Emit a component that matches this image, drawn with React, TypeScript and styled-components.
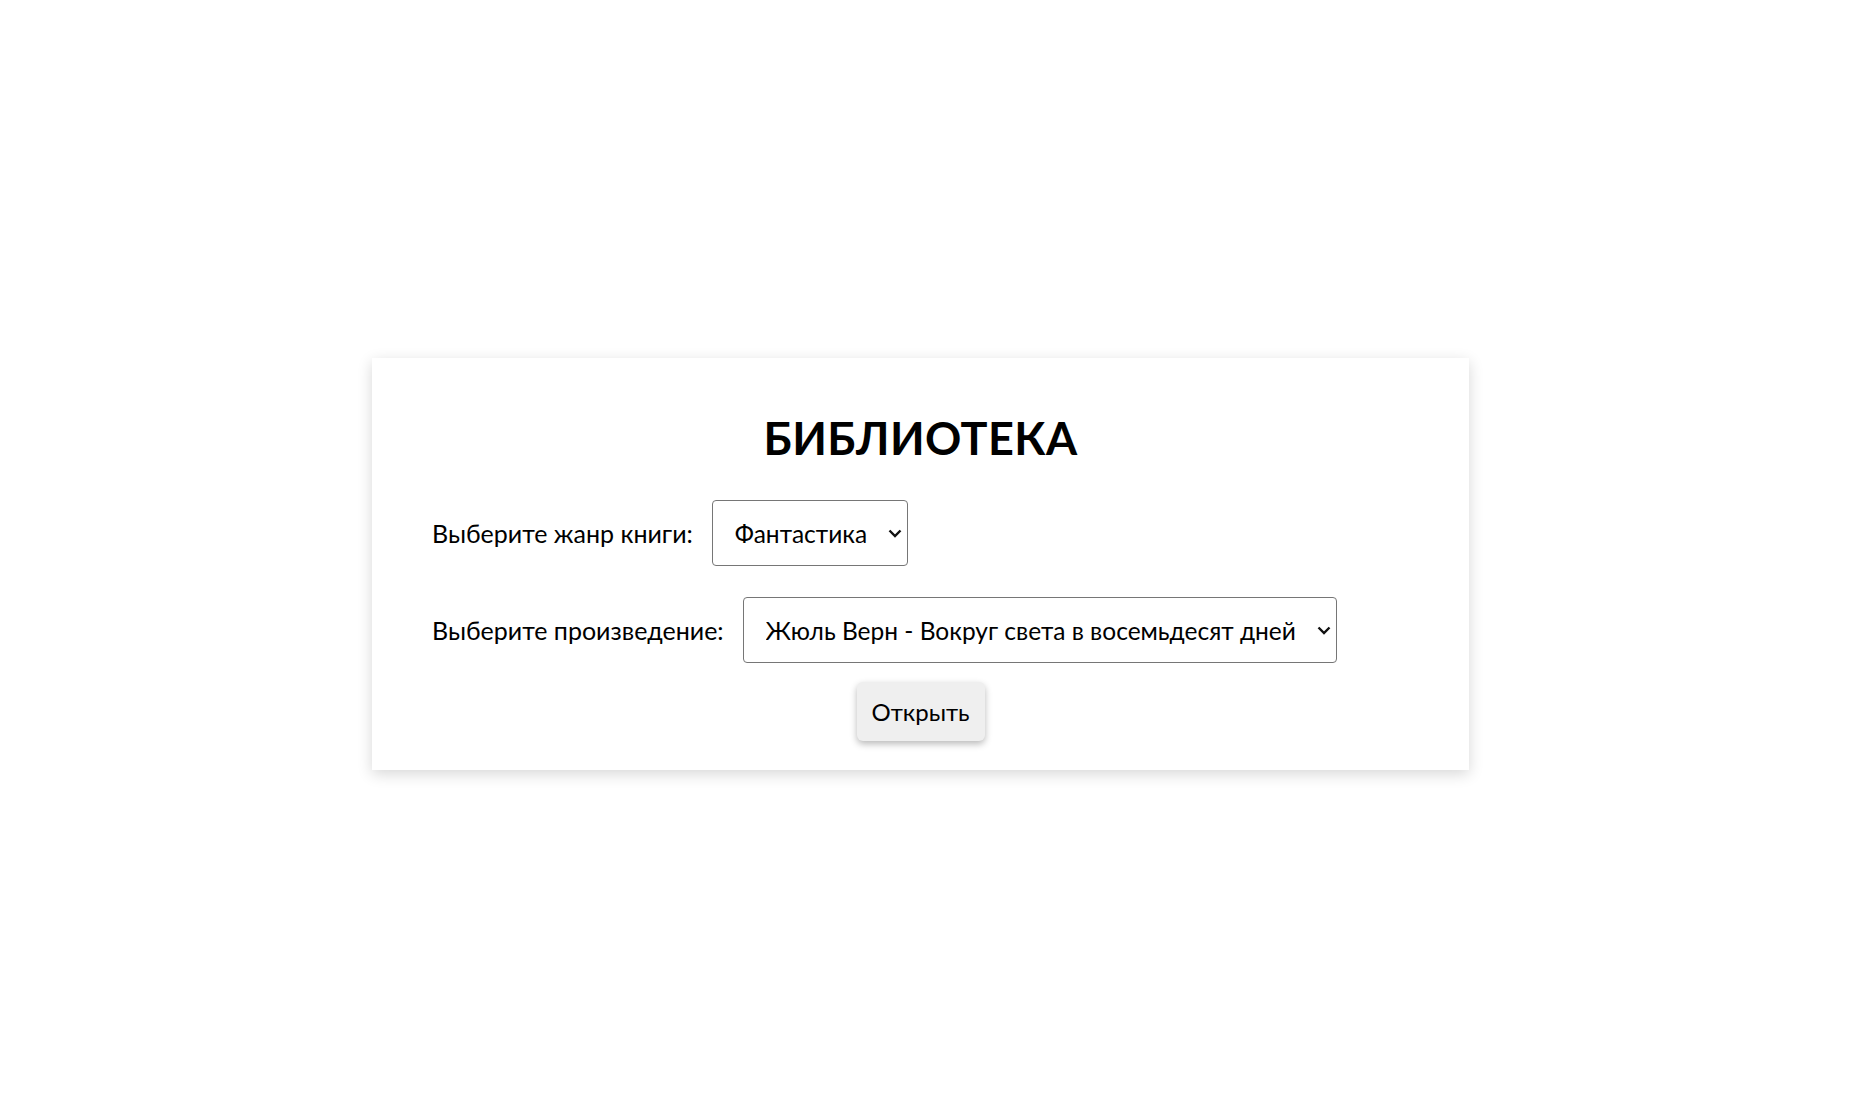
import React, { useState } from "react";
import styled, { createGlobalStyle } from "styled-components";

const Global = createGlobalStyle`
  html, body { margin: 0; padding: 0; background: #ffffff; }
  body { font-family: Lato, "Open Sans", "Noto Sans", sans-serif; color: #000; }
`;

const Page = styled.div`
  display: flex;
  align-items: flex-start;
  padding: 358px 0 0 372px;
  min-height: 1110px;
  box-sizing: border-box;
`;

const Card = styled.main`
  width: 1097px;
  height: 412px;
  box-sizing: border-box;
  background: #fff;
  box-shadow: 0 4px 14px rgba(0, 0, 0, 0.16);
  padding: 48px 60px 29px;
  display: flex;
  flex-direction: column;
`;

const Title = styled.h1`
  margin: 0 0 30px;
  text-align: center;
  font-size: 45px;
  font-weight: 700;
  line-height: 64px;
  letter-spacing: 0.4px;
`;

const Row = styled.div<{ $gapBelow: number }>`
  display: flex;
  align-items: center;
  gap: 19px;
  margin-bottom: ${(p) => p.$gapBelow}px;
`;

const Label = styled.label`
  font-size: 25px;
  white-space: nowrap;
`;

const SelectWrap = styled.div<{ $width: number }>`
  position: relative;
  width: ${(p) => p.$width}px;
  height: 66px;
`;

const Select = styled.select`
  appearance: none;
  -webkit-appearance: none;
  width: 100%;
  height: 100%;
  box-sizing: border-box;
  font-family: Lato, "Open Sans", "Noto Sans", sans-serif;
  font-size: 24.5px;
  color: #000;
  padding: 0 28px 0 22px;
  border: 1px solid #767676;
  border-radius: 4px;
  background: #fff;
  outline: none;
`;

const Chevron = styled.svg`
  position: absolute;
  right: 6px;
  top: 50%;
  width: 14px;
  height: 9px;
  margin-top: -4px;
  pointer-events: none;
`;

const Button = styled.button`
  align-self: center;
  width: 128px;
  height: 60px;
  font-family: Lato, "Open Sans", "Noto Sans", sans-serif;
  font-size: 24px;
  color: #000;
  background: #efefef;
  border: none;
  border-radius: 6px;
  box-shadow: 0 3px 7px rgba(0, 0, 0, 0.28);
  cursor: pointer;
`;

const Arrow = () => (
  <Chevron viewBox="0 0 14 9">
    <path d="M1.5 1.5 L7 7 L12.5 1.5" fill="none" stroke="#111" strokeWidth="2.4" />
  </Chevron>
);

export default function App() {
  const [genre, setGenre] = useState("fantasy");
  const [book, setBook] = useState("verne");
  return (
    <>
      <Global />
      <Page>
        <Card>
          <Title>БИБЛИОТЕКА</Title>
          <Row $gapBelow={31}>
            <Label htmlFor="genre">Выберите жанр книги:</Label>
            <SelectWrap $width={196}>
              <Select id="genre" value={genre} onChange={(e) => setGenre(e.target.value)}>
                <option value="fantasy">Фантастика</option>
                <option value="detective">Детектив</option>
                <option value="novel">Роман</option>
              </Select>
              <Arrow />
            </SelectWrap>
          </Row>
          <Row $gapBelow={19}>
            <Label htmlFor="book">Выберите произведение:</Label>
            <SelectWrap $width={594}>
              <Select id="book" value={book} onChange={(e) => setBook(e.target.value)}>
                <option value="verne">Жюль Верн - Вокруг света в восемьдесят дней</option>
                <option value="wells">Герберт Уэллс - Машина времени</option>
              </Select>
              <Arrow />
            </SelectWrap>
          </Row>
          <Button type="button">Открыть</Button>
        </Card>
      </Page>
    </>
  );
}
